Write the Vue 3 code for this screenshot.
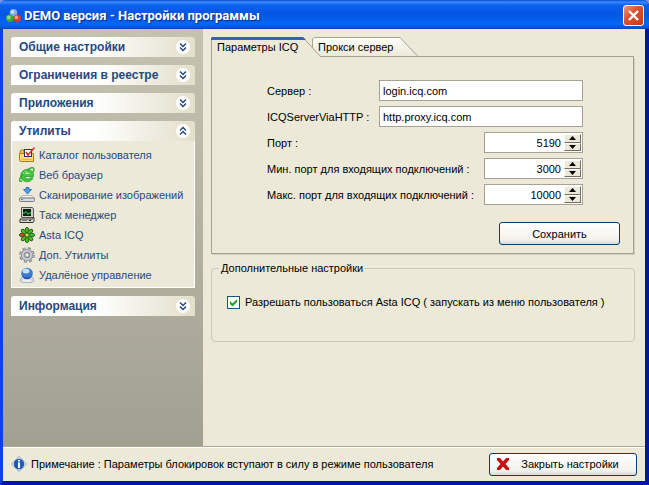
<script setup>
import { ref } from 'vue'

const groups = ref([
  { title: 'Общие настройки', open: false, items: [] },
  { title: 'Ограничения в реестре', open: false, items: [] },
  { title: 'Приложения', open: false, items: [] },
  {
    title: 'Утилиты',
    open: true,
    items: [
      { icon: 'folder', text: 'Каталог пользователя' },
      { icon: 'browser', text: 'Веб браузер' },
      { icon: 'scanner', text: 'Сканирование изображений' },
      { icon: 'monitor', text: 'Таск менеджер' },
      { icon: 'flower', text: 'Asta ICQ' },
      { icon: 'gear', text: 'Доп. Утилиты' },
      { icon: 'remote', text: 'Удалёное управление' },
    ],
  },
  { title: 'Информация', open: false, items: [] },
])

const server = ref('login.icq.com')
const httpServer = ref('http.proxy.icq.com')
const ports = ref([
  { id: 'port', label: 'Порт :', value: 5190 },
  { id: 'port-min', label: 'Мин. порт для входящих подключений :', value: 3000 },
  { id: 'port-max', label: 'Макс. порт для входящих подключений :', value: 10000 },
])
const allowIcq = ref(true)
const petals = [0, 45, 90, 135, 180, 225, 270, 315]
</script>

<template>
  <div class="window">
    <header class="titlebar">
      <svg class="logo" viewBox="0 0 16 16">
        <circle cx="8" cy="5" r="4" fill="#7fb2e8" />
        <circle cx="7" cy="4" r="2" fill="#c5e0fa" />
        <circle cx="4" cy="11" r="4" fill="#35b135" />
        <circle cx="3" cy="10" r="2" fill="#8be088" />
        <circle cx="12" cy="11" r="4" fill="#dc3a2c" />
        <circle cx="11" cy="10" r="2" fill="#f79a8c" />
      </svg>
      <h1>DEMO версия - Настройки программы</h1>
      <button class="close" type="button" aria-label="Закрыть">
        <svg viewBox="0 0 19 19"><path d="M5 5L14 14M14 5L5 14" stroke="#fff" stroke-width="2.4" /></svg>
      </button>
    </header>

    <div class="content">
      <aside class="sidebar">
        <section v-for="group in groups" :key="group.title">
          <button class="group-head" type="button" @click="group.open = !group.open">
            <span>{{ group.title }}</span>
            <svg class="chevron" viewBox="0 0 14 14">
              <circle cx="7" cy="7" r="7" fill="#fff" />
              <path v-if="group.open" d="M4 6.5L7 3.5L10 6.5M4 10.5L7 7.5L10 10.5" />
              <path v-else d="M4 3.5L7 6.5L10 3.5M4 7.5L7 10.5L10 7.5" />
            </svg>
          </button>
          <ul v-if="group.open" class="group-body">
            <li v-for="item in group.items" :key="item.text">
              <a href="#">
                <svg class="icon" viewBox="0 0 16 16">
                  <g v-if="item.icon === 'folder'">
                    <path d="M1 5L2 3H5V14H2L1 13Z" fill="#f6c84a" stroke="#a8741c" />
                    <path d="M0.500 6.500H14.500V14.500H1.500L0.500 13Z" fill="#fbdc6d" stroke="#b27a14" />
                    <rect x="5.500" y="2.500" width="7" height="7" fill="#fff" stroke="#30306c" />
                    <path d="M2 12.500H13" stroke="#f0bb3c" />
                    <path d="M7 5L9 8L15.500 0.500" fill="none" stroke="#e02020" stroke-width="1.500" />
                  </g>
                  <g v-else-if="item.icon === 'browser'">
                    <path d="M14.500 9.500H5.500C6 12 10 12.500 11 10.800H14C12.500 15 7 16 3.500 13C0 9.500 2 3.500 7 2.500C12 2 15 5 14.500 9.500Z" fill="#43c63e" stroke="#209524" stroke-width=".7" />
                    <path d="M5.500 7C6.500 4.500 10 4.500 11 7Z" fill="#a8e8a0" />
                    <path d="M3 14C-1 16 0 10 6 5C10 1 15 -1 15 2.500C15 3.500 14 5 13.500 5.500" fill="none" stroke="#2ba92c" stroke-width="1.400" />
                    <path d="M4 7C5 5 6 4 8 4" fill="none" stroke="#a4ef92" />
                  </g>
                  <g v-else-if="item.icon === 'scanner'">
                    <path d="M7 0.500H10V2.500H12.500L8.500 7L4.500 2.500H7Z" fill="#4f9be8" stroke="#235fa8" stroke-width=".8" />
                    <path d="M4 8.500H13L15.500 11H1Z" fill="#f5f5f5" stroke="#a7a7ad" stroke-width=".8" />
                    <rect x=".5" y="11" width="15" height="3.500" rx="1" fill="#d9d9de" stroke="#73737b" stroke-width=".9" />
                    <path d="M2 12.500H4" stroke="#3da63d" />
                  </g>
                  <g v-else-if="item.icon === 'monitor'">
                    <path d="M2.500 0.500H13.500L14.500 2V10.500H2.500Z" fill="#d1d1cb" stroke="#555" />
                    <rect x="4" y="2" width="8" height="7" fill="#07200f" />
                    <path d="M4 6H6L7 4.500L9 7.500L10 6H12" fill="none" stroke="#35d34d" />
                    <path d="M1 12H13L15 10.500V14L14 15.500H1Z" fill="#d8d8d2" stroke="#333" />
                    <path d="M3 13.500H8" stroke="#777" />
                    <path d="M10 13.500H12" stroke="#222" />
                  </g>
                  <g v-else-if="item.icon === 'flower'">
                    <ellipse
                      v-for="angle in petals"
                      :key="angle"
                      cx="8"
                      cy="3.200"
                      rx="1.800"
                      ry="2.900"
                      :fill="angle === 270 ? '#e43a20' : '#45bd22'"
                      stroke="#14500d"
                      stroke-width=".8"
                      :transform="`rotate(${angle} 8 8)`"
                    />
                    <circle cx="8" cy="8" r="1.600" fill="#f6e84c" stroke="#56740f" stroke-width=".7" />
                  </g>
                  <g v-else-if="item.icon === 'gear'">
                    <circle cx="8" cy="8" r="6.300" fill="none" stroke="#777780" stroke-width="3" stroke-dasharray="2.700 2.248" />
                    <circle cx="8" cy="8" r="4.300" fill="none" stroke="#777780" stroke-width="3.600" />
                    <circle cx="8" cy="8" r="6.300" fill="none" stroke="#b9b9c1" stroke-width="1.600" stroke-dasharray="1.600 3.348" stroke-dashoffset="-0.500" />
                    <circle cx="8" cy="8" r="4.300" fill="none" stroke="#c9c9d1" stroke-width="2.200" />
                    <circle cx="8" cy="8" r="2" fill="#efeee7" stroke="#777780" stroke-width=".7" />
                  </g>
                  <g v-else>
                    <path d="M2 11L4 9H12L14 11L15 14L12 15.500H4L1 14Z" fill="#d7dbe4" stroke="#a1a8b8" stroke-width=".8" />
                    <circle cx="8" cy="6.500" r="5.800" fill="#3d78cf" />
                    <path d="M3 9C5 13 11 13 13 9C10 11 6 11 3 9Z" fill="#1d479e" />
                    <ellipse cx="7" cy="4" rx="3.500" ry="2.500" fill="#c3e1fb" />
                    <path d="M4 14H12" stroke="#fff" />
                  </g>
                </svg>
                <span>{{ item.text }}</span>
              </a>
            </li>
          </ul>
        </section>
      </aside>

      <main class="main">
        <div class="tabs">
          <button class="tab tab-active" type="button">
            <svg viewBox="0 0 110 20">
              <path d="M0.500 20V2L2 0.500H92L109.500 19.500" fill="#ece9d8" stroke="#a5a294" />
              <path d="M0 3V1L1 0H92L95 3Z" fill="#3563b4" />
            </svg>
            <span>Параметры ICQ</span>
          </button>
          <button class="tab tab-second" type="button">
            <svg viewBox="0 0 107 20">
              <defs>
                <linearGradient id="tab-fill" x1="0" y1="0" x2="0" y2="1">
                  <stop offset="0" stop-color="#fdfdfb" />
                  <stop offset="1" stop-color="#ece9d8" />
                </linearGradient>
              </defs>
              <path d="M8 19.500L0.500 11V2L2 0.500H88L106 19.500Z" fill="url(#tab-fill)" stroke="#a5a294" />
            </svg>
            <span>Прокси сервер</span>
          </button>
          <span class="tab-line"></span>
        </div>

        <form class="panel" @submit.prevent>
          <div class="row">
            <label for="server">Сервер :</label>
            <input id="server" v-model="server" class="field" type="text" />
          </div>
          <div class="row">
            <label for="http-server">ICQServerViaHTTP :</label>
            <input id="http-server" v-model="httpServer" class="field" type="text" />
          </div>
          <div v-for="port in ports" :key="port.id" class="row">
            <label :for="port.id">{{ port.label }}</label>
            <div class="spin">
              <input :id="port.id" v-model="port.value" type="text" />
              <div class="spin-buttons">
                <button type="button" aria-label="Больше" @click="port.value++">
                  <svg viewBox="0 0 7 4"><path d="M0 4L3.500 0L7 4Z" /></svg>
                </button>
                <button type="button" aria-label="Меньше" @click="port.value--">
                  <svg viewBox="0 0 7 4"><path d="M0 0L3.500 4L7 0Z" /></svg>
                </button>
              </div>
            </div>
          </div>
          <button class="button save" type="submit">Сохранить</button>
        </form>

        <fieldset class="extra">
          <legend>Дополнительные настройки</legend>
          <label class="check">
            <input v-model="allowIcq" type="checkbox" />
            <svg viewBox="0 0 13 13"><path v-if="allowIcq" d="M3 5V8L5.500 10.500L10 6V3L5.500 7.500Z" fill="#21a121" /></svg>
            <span>Разрешать пользоваться Asta ICQ ( запускать из меню пользователя )</span>
          </label>
        </fieldset>
      </main>
    </div>

    <footer class="footer">
      <svg class="icon" viewBox="0 0 16 16">
        <path d="M8 0.500L15.500 8L8 15.500L0.500 8Z" fill="#dce6f6" stroke="#8fa3c8" stroke-linejoin="round" />
        <circle cx="8" cy="8" r="5.200" fill="#2459b8" />
        <path d="M7 4H9V5.500H7ZM7 6.500H9V12H7Z" fill="#fff" />
      </svg>
      <p>Примечание : Параметры блокировок вступают в силу в режиме пользователя</p>
      <button class="button quit" type="button">
        <svg viewBox="0 0 14 12">
          <path d="M1 0H4L7 3.500L10 0H13V2L9.500 6L13 10V12H10L7 8.500L4 12H1V10L4.500 6L1 2Z" fill="#c80f0f" />
        </svg>
        <span>Закрыть настройки</span>
      </button>
    </footer>
  </div>
</template>

<style>
body {
  margin: 0;
  background: #7a96df;
}
</style>

<style scoped>
.window {
  box-sizing: border-box;
  min-height: 100vh;
  display: flex;
  flex-direction: column;
  border: solid;
  border-width: 0 4px 4px 3px;
  border-color: #0831d9 #0014a8 #0014a8 #0845e0;
  border-radius: 6px 6px 0 0;
  background: #ece9d8;
  color: #000;
  font-family: "Liberation Sans", sans-serif;
  font-size: 11px;
  line-height: 16px;
}

button,
input {
  box-sizing: border-box;
  margin: 0;
  padding: 0;
  font: inherit;
  color: inherit;
}

svg {
  display: block;
  flex: none;
}

.titlebar {
  height: 29px;
  margin: 0 -4px 0 -3px;
  padding: 2px 5px 0 6px;
  box-sizing: border-box;
  display: flex;
  align-items: center;
  border-radius: 6px 6px 0 0;
  background: linear-gradient(#0a4bd0 0, #3a8bff 2px, #0b62ee 5px, #0455e4 14px, #0566f8 24px, #0450d8 28px, #0340b0 29px);
}

.logo {
  width: 15px;
  height: 15px;
  margin-right: 3px;
}

h1 {
  flex: 1;
  margin: 0;
  color: #fff;
  font-family: Roboto, sans-serif;
  font-size: 13px;
  font-weight: bold;
  text-shadow: 1px 1px 1px #0a2a80;
}

.close {
  width: 21px;
  height: 21px;
  border: 1px solid #fff;
  border-radius: 3px;
  background: linear-gradient(135deg, #ec9a80, #dc5332 40%, #c63a16);
}

.close svg {
  width: 19px;
  height: 19px;
}

.content {
  flex: 1;
  display: flex;
}

.sidebar {
  flex: none;
  width: 200px;
  box-sizing: border-box;
  padding: 8px;
  display: flex;
  flex-direction: column;
  gap: 8px;
  background: linear-gradient(#c5c2b0, #a2a091);
  color: #28487f;
}

.group-head {
  width: 100%;
  height: 20px;
  padding: 0 5px 0 8px;
  display: flex;
  align-items: center;
  justify-content: space-between;
  border: 0;
  border-radius: 3px 3px 0 0;
  background: linear-gradient(90deg, #fff 45%, #e2dfca);
  font-size: 12px;
  font-weight: bold;
}

.chevron {
  width: 14px;
  height: 14px;
}

.chevron path {
  fill: none;
  stroke: #28487f;
  stroke-width: 1.5;
}

.group-body {
  margin: 0;
  padding: 4px 7px 2px;
  border: 1px solid #fff;
  border-top: 0;
  background: #ece9d8;
  list-style: none;
}

.group-body a {
  height: 20px;
  display: flex;
  align-items: center;
  gap: 4px;
  color: inherit;
  text-decoration: none;
  white-space: nowrap;
}

.icon {
  width: 16px;
  height: 16px;
}

.main {
  flex: 1;
  min-width: 0;
  padding: 8px 11px 8px 8px;
}

.tabs {
  display: flex;
}

.tab {
  position: relative;
  height: 20px;
  border: 0;
  background: none;
  text-align: left;
}

.tab svg {
  position: absolute;
  top: 0;
  left: 0;
  width: 100%;
  height: 100%;
}

.tab span {
  position: relative;
  padding-left: 6px;
}

.tab-active {
  z-index: 1;
  width: 110px;
}

.tab-second {
  width: 107px;
  margin-left: -9px;
}

.tab-line {
  flex: 1;
  margin-left: -1px;
  border-bottom: 1px solid #a5a294;
}

.panel {
  padding: 23px 50px 8px 55px;
  display: flex;
  flex-direction: column;
  gap: 5px;
  border: solid #a5a294;
  border-width: 0 1px 1px;
  box-shadow: 1px 1px 0 #d3d0bf;
}

.row {
  height: 21px;
  display: flex;
  align-items: center;
  justify-content: space-between;
}

.field {
  width: 204px;
  height: 21px;
  padding: 0 3px;
  border: 1px solid #a5a294;
  background: #fff;
}

.spin {
  width: 99px;
  height: 21px;
  box-sizing: border-box;
  padding: 1px;
  display: flex;
  gap: 3px;
  border: 1px solid #a5a294;
  background: #fff;
}

.spin input {
  flex: 1;
  min-width: 0;
  border: 0;
  background: none;
  text-align: right;
}

.spin-buttons {
  width: 17px;
  display: flex;
  flex-direction: column;
}

.spin-buttons button {
  flex: 1;
  min-height: 0;
  display: flex;
  align-items: center;
  justify-content: center;
  border: 1px solid;
  border-color: #fff #716f64 #716f64 #fff;
  background: #ece9d8;
}

.spin-buttons svg {
  width: 7px;
  height: 4px;
}

.button {
  height: 23px;
  border: 1px solid #003c74;
  border-radius: 3px;
  background: linear-gradient(#fff, #f3f2ec 80%, #dcd8cb);
}

.save {
  width: 121px;
  margin: 12px -37px 0 0;
  align-self: flex-end;
}

.extra {
  margin: 6px -1px 0 0;
  padding: 18px 15px 31px;
  border: 1px solid #cbc8b8;
  border-radius: 4px;
}

.extra legend {
  margin-left: -8px;
  padding: 0 2px;
}

.check {
  position: relative;
  display: flex;
  align-items: center;
  gap: 5px;
  white-space: nowrap;
}

.check input {
  appearance: none;
  width: 13px;
  height: 13px;
  border: 1px solid #1c5180;
  background: #fff;
}

.check svg {
  position: absolute;
  left: 0;
  width: 13px;
  height: 13px;
  pointer-events: none;
}

.footer {
  height: 35px;
  box-sizing: border-box;
  padding: 0 8px;
  display: flex;
  align-items: center;
  gap: 4px;
  border-top: 1px solid #aca899;
  box-shadow: inset 0 1px #fff;
}

.footer p {
  flex: 1;
  margin: 0;
  white-space: nowrap;
}

.quit {
  width: 148px;
  padding: 0 6px;
  display: flex;
  align-items: center;
}

.quit svg {
  width: 14px;
  height: 12px;
}

.quit span {
  flex: 1;
}
</style>
